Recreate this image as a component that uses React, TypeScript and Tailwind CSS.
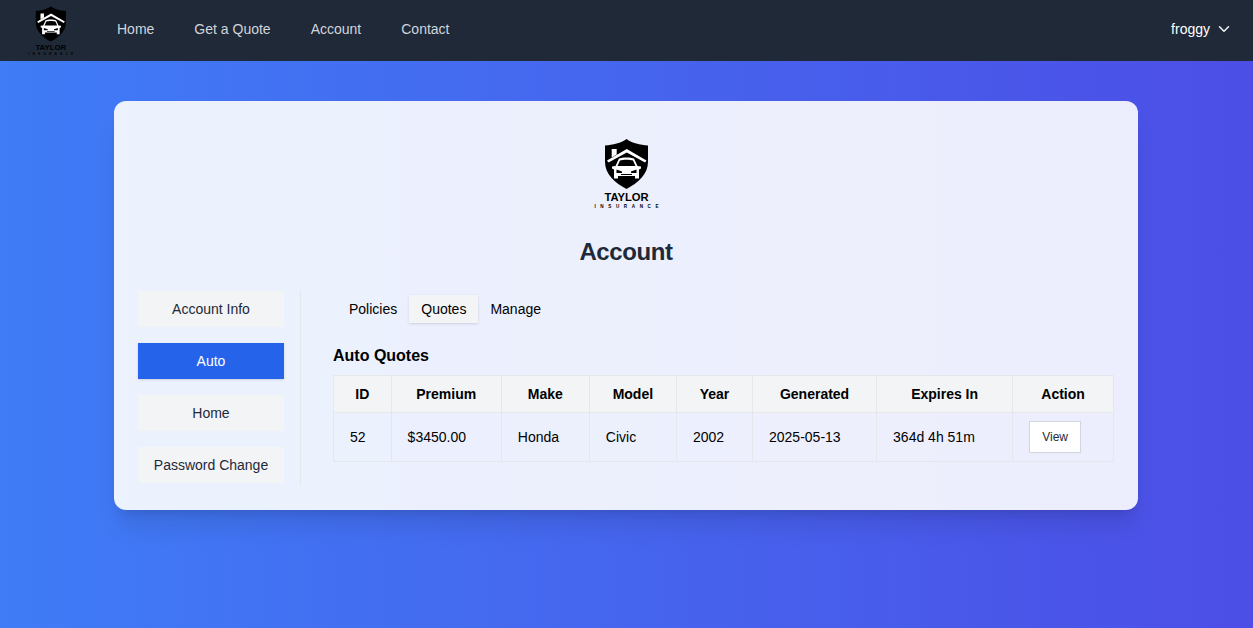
import { ChevronDown } from "lucide-react";

const Logo = ({ className }: { className: string }) => {
  return (
    <svg viewBox="1 0 90 85" className={className} aria-label="Taylor Insurance logo">
      <path d="M46.5 9C41 13 33 15 25 15.5V32C25 44 35 53 46.5 59C58 53 68 44 68 32V15.5C60 15 52 13 46.5 9Z" fill="#000" />
      <path d="M27 30.5L46.8 19L66.5 30.5L65 32.5L46.8 22.5L28.5 32.5Z" fill="#fff" />
      <path d="M31.7 19H36.7V24.5L31.7 27.5Z" fill="#fff" />
      <path d="M39 28.5C42 27 51 27 54 28.5L57.5 36L61 36.5V38.5L59 39.5V48.5H55V46H38V48.5H34V39.5L32 38.5V36.5L35.5 36Z" fill="#fff" />
      <path d="M40 30.5C43 29.5 50 29.5 53 30.5L55.5 36H37.5Z" fill="#000" />
      <path d="M36.5 39.5L42 41.5V43H36.5ZM56.5 39.5L51 41.5V43H56.5Z" fill="#000" />
      <path d="M41 44H52V45H41Z" fill="#000" />
      <text x="46.5" y="71" textAnchor="middle" fontSize="11.2" fontWeight="700" fontFamily="Liberation Sans, Arial, sans-serif" fill="#000">
        TAYLOR
      </text>
      <text x="48.8" y="78" textAnchor="middle" fontSize="4.6" fontWeight="700" letterSpacing="4.6" fontFamily="Liberation Sans, Arial, sans-serif" fill="#000">
        INSURANCE
      </text>
    </svg>
  );
};

const cols = ["ID", "Premium", "Make", "Model", "Year", "Generated", "Expires In", "Action"];
const row = ["52", "$3450.00", "Honda", "Civic", "2002", "2025-05-13", "364d 4h 51m"];
const sideItems = ["Account Info", "Auto", "Home", "Password Change"];

const App = () => {
  return (
    <div className="min-h-screen bg-linear-to-r/srgb from-[#3f7cf6] to-[#4c4ee6] font-['Liberation_Sans',Arial,sans-serif]">
      <nav className="h-[61px] bg-[#1f2937] flex items-start justify-between pl-[19px] pr-5">
        <div className="flex items-start gap-[35px]">
          <Logo className="w-[63px] h-[60px]" />
          <div className="flex items-center gap-10 text-sm text-gray-300 h-[58px]">
            <a>Home</a>
            <a>Get a Quote</a>
            <a>Account</a>
            <a>Contact</a>
          </div>
        </div>
        <div className="flex items-center gap-[5px] text-sm text-white h-[58px]">
          froggy
          <ChevronDown size={18} strokeWidth={2} className="text-gray-100" />
        </div>
      </nav>

      <main className="pt-10 pr-px">
        <div className="max-w-5xl mx-auto bg-white/90 rounded-xl shadow-xl p-6">
          <div className="flex justify-center">
            <Logo className="w-[90px] h-[85px] mt-[5px]" />
          </div>
          <h2 className="text-2xl font-bold text-gray-800 text-center tracking-[-0.4px] mt-[21px] mb-[23px]">Account</h2>

          <div className="flex">
            <div className="w-[163px] pr-4 pb-[3px] border-r border-gray-200 flex flex-col gap-4">
              {sideItems.map((item) => (
                <button
                  key={item}
                  className={
                    item === "Auto"
                      ? "h-9 text-sm bg-[#2563eb] text-white shadow-sm"
                      : "h-9 text-sm bg-gray-100 text-gray-800"
                  }
                >
                  {item}
                </button>
              ))}
            </div>

            <div className="flex-1 pl-8">
              <div className="flex p-1 text-sm text-black">
                <button className="px-3 py-1">Policies</button>
                <button className="px-3 py-1 bg-gray-100 shadow-sm">Quotes</button>
                <button className="px-3 py-1">Manage</button>
              </div>
              <h3 className="text-base font-bold text-black mt-[17px] mb-[7px]">Auto Quotes</h3>
              <table className="w-full border-collapse text-sm text-black">
                <thead>
                  <tr className="bg-gray-100">
                    {cols.map((c) => (
                      <th key={c} className="border border-gray-200 px-4 py-2 h-[37px] font-bold text-center">
                        {c}
                      </th>
                    ))}
                  </tr>
                </thead>
                <tbody>
                  <tr>
                    {row.map((c) => (
                      <td key={c} className="border border-gray-200 px-4 py-2 text-left">
                        {c}
                      </td>
                    ))}
                    <td className="border border-gray-200 px-4 py-2 text-left">
                      <button className="block w-[52px] h-8 bg-white border border-gray-300 text-xs text-gray-800">
                        View
                      </button>
                    </td>
                  </tr>
                </tbody>
              </table>
            </div>
          </div>
        </div>
      </main>
    </div>
  );
};

export default App;
